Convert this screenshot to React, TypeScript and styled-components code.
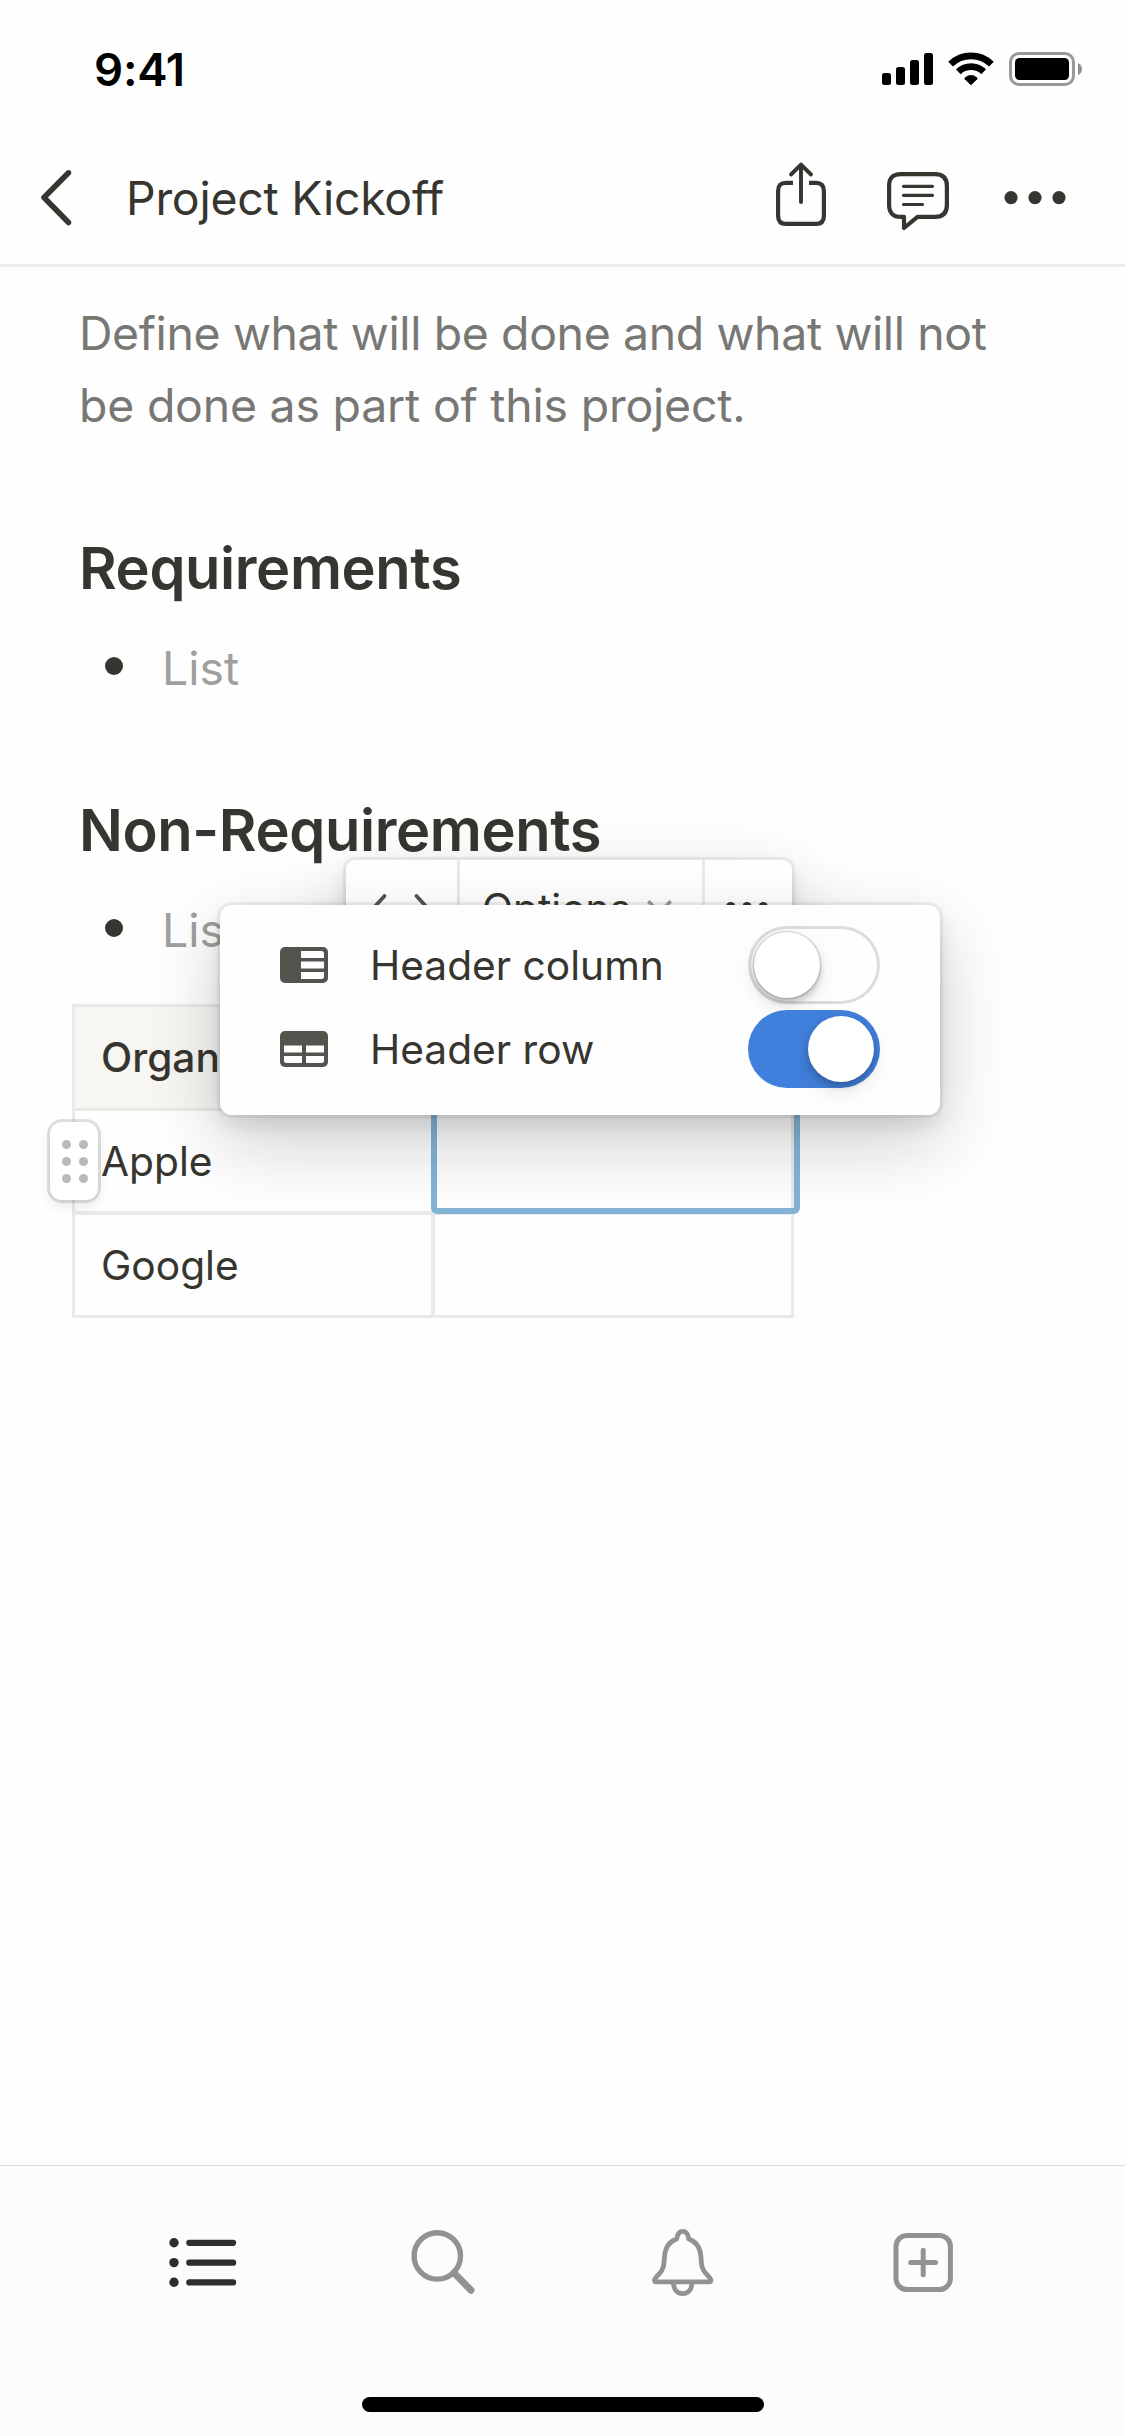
import React from "react";
import styled, { createGlobalStyle, css } from "styled-components";

const ink = "#37352f";
const line = "#e9e9e7";
const muted = "#929292";

const GlobalStyle = createGlobalStyle`
  * { box-sizing: border-box; }
  body {
    margin: 0;
    background: #fefefe;
    font-family: Inter, "Liberation Sans", sans-serif;
    color: ${ink};
  }
  svg { display: block; flex: none; overflow: visible; }
`;

const floatingShadow = css`
  box-shadow: 0 0 0 3px rgba(15, 15, 15, 0.06), 0 9px 18px rgba(15, 15, 15, 0.1),
    0 27px 72px rgba(15, 15, 15, 0.2);
`;

const Screen = styled.div`
  width: 1125px;
  height: 2436px;
  display: flex;
  flex-direction: column;
  background: #fefefe;
  overflow: hidden;
`;

const StatusBar = styled.div`
  height: 132px;
  padding: 6px 43px 0 94px;
  display: flex;
  align-items: center;
  justify-content: space-between;
`;

const Time = styled.span`
  font-size: 45.5px;
  font-weight: 600;
  letter-spacing: -0.2px;
  color: #000;
`;

const StatusIcons = styled.div`
  display: flex;
  align-items: center;
  gap: 15px;
`;

const Header = styled.header`
  height: 135px;
  border-bottom: 3px solid #ededec;
  padding: 0 59px 0 41px;
  display: flex;
  align-items: center;
`;

const Title = styled.h1`
  flex: 1;
  margin: 0 0 0 54px;
  font-size: 46.4px;
  font-weight: 400;
  letter-spacing: -0.24px;
`;

const HeaderActions = styled.div`
  display: flex;
  align-items: center;
  gap: 55px;

  & > :first-child {
    margin-right: 6px;
  }
`;

const Content = styled.main`
  position: relative;
  flex: 1;
  padding: 30px 72px 0;
`;

const Description = styled.p`
  margin: 0;
  padding: 0 7px;
  font-size: 46.4px;
  line-height: 72px;
  letter-spacing: -0.2px;
  white-space: nowrap;
  color: #787774;

  &::first-line {
    letter-spacing: -0.36px;
  }
`;

const Heading = styled.h2<{ $gap: number }>`
  margin: ${(p) => p.$gap}px 0 25px;
  padding: 0 7px;
  font-size: 57.8px;
  line-height: 78px;
  font-weight: 600;
  letter-spacing: -0.38px;
`;

const Bullet = styled.div`
  height: 72px;
  padding-left: 33px;
  display: flex;
  align-items: center;
  font-size: 46.4px;
  line-height: 72px;
  color: #9f9f9d;
  gap: 39px;

  &::before {
    content: "";
    width: 18px;
    height: 18px;
    margin-bottom: 5px;
    border-radius: 50%;
    background: ${ink};
  }
`;

const Table = styled.div`
  position: relative;
  width: 722px;
  margin-top: 38px;
  border: solid ${line};
  border-width: 3px 0 0 3px;
  display: grid;
  grid-template-columns: 360px 359px;
  grid-template-rows: 104px 104px 103px;
`;

const Cell = styled.div<{ $header?: boolean; $right?: number; $bottom?: number }>`
  padding-left: 26px;
  display: flex;
  align-items: center;
  border: solid ${line};
  border-width: 0 ${(p) => p.$right ?? 3}px ${(p) => p.$bottom ?? 3}px 0;
  background: ${(p) => (p.$header ? "#f7f6f3" : "transparent")};
  font-size: 40.7px;
  font-weight: ${(p) => (p.$header ? 500 : 400)};
`;

const Selection = styled.div`
  position: absolute;
  left: 356px;
  top: 98px;
  width: 369px;
  height: 109px;
  border: 6px solid #83b3d7;
  border-radius: 6px;
`;

const DragHandle = styled.div`
  position: absolute;
  left: -25px;
  top: 115px;
  width: 48px;
  height: 78px;
  border-radius: 12px;
  background: #fff;
  box-shadow: 0 0 0 3px rgba(15, 15, 15, 0.12), 0 6px 12px rgba(15, 15, 15, 0.1);
  display: grid;
  grid-template-columns: 9px 9px;
  grid-auto-rows: 9px;
  gap: 8px;
  place-content: center;
  padding-left: 2px;
`;

const HandleDot = styled.i`
  border-radius: 50%;
  background: #b9b9b7;
`;

const Toolbar = styled.div`
  position: absolute;
  left: 346px;
  top: 593px;
  width: 446px;
  height: 96px;
  display: flex;
  border-radius: 9px;
  background: #fff;
  ${floatingShadow}
`;

const ToolButton = styled.div<{ $width: number; $divider?: boolean }>`
  width: ${(p) => p.$width}px;
  padding-right: ${(p) => (p.$width > 200 ? 8 : 3)}px;
  display: flex;
  align-items: center;
  justify-content: center;
  gap: 16px;
  font-size: 40.7px;
  border-right: ${(p) => (p.$divider ? `3px solid ${line}` : "none")};

  & > svg {
    margin-bottom: 2px;
  }
`;

const Menu = styled.div`
  position: absolute;
  left: 220px;
  top: 638px;
  width: 720px;
  height: 210px;
  padding: 18px 60px 24px;
  border-radius: 12px;
  background: #fefefe;
  ${floatingShadow}
`;

const MenuRow = styled.div`
  height: 84px;
  display: flex;
  align-items: center;
`;

const MenuLabel = styled.span`
  flex: 1;
  margin-left: 42px;
  font-size: 40.7px;
`;

const Toggle = styled.div<{ $on?: boolean }>`
  width: 132px;
  height: 78px;
  padding: 6px;
  border-radius: 39px;
  display: flex;
  justify-content: ${(p) => (p.$on ? "flex-end" : "flex-start")};
  background: ${(p) => (p.$on ? "#407fdb" : "#fefefe")};
  box-shadow: ${(p) => (p.$on ? "none" : "inset 0 0 0 3px #dcdcdc")};
`;

const Knob = styled.div<{ $on?: boolean }>`
  width: 66px;
  height: 66px;
  border-radius: 50%;
  background: #fff;
  box-shadow: ${(p) => (p.$on ? "" : "0 0 0 1.5px rgba(15, 15, 15, 0.12), ")}
    0 4px 6px rgba(15, 15, 15, 0.24), 0 9px 24px rgba(15, 15, 15, 0.1);
`;

const TabBar = styled.nav`
  height: 271px;
  border-top: 1px solid #dededd;
  background: #fcfcfc;
  display: flex;
  flex-direction: column;
  align-items: center;
`;

const Tabs = styled.div`
  height: 231px;
  padding: 60px 0 0;
  display: flex;
`;

const Tab = styled.div<{ $active?: boolean }>`
  width: 240px;
  display: flex;
  justify-content: center;
  color: ${(p) => (p.$active ? "#2f2e2d" : muted)};
`;

const HomeIndicator = styled.div`
  width: 402px;
  height: 15px;
  border-radius: 8px;
  background: #000;
`;

const SignalIcon = () => (
  <svg width="51" height="34" viewBox="0 0 51 34">
    <rect x="0" y="21" width="9" height="12" rx="2.5" />
    <rect x="14" y="15" width="9" height="18" rx="2.5" />
    <rect x="28" y="8" width="9" height="25" rx="2.5" />
    <rect x="42" y="1" width="9" height="32" rx="2.5" />
  </svg>
);

const WifiIcon = () => (
  <svg width="46" height="34" viewBox="0 0 46 34">
    <g fill="none" stroke="#000" strokeWidth="6.8">
      <path d="M2.6 12.1A29.2 29.2 0 0 1 43.4 12.1" />
      <path d="M10.3 19.8A18.4 18.4 0 0 1 35.7 19.8" />
    </g>
    <path d="M23 33.2L16.8 27.2Q16 26.2 17 25.4Q23 20.8 29 25.4Q30 26.2 29.2 27.2Z" />
  </svg>
);

const BatteryIcon = () => (
  <svg width="73" height="34" viewBox="0 0 73 34">
    <rect x="1.5" y="1.5" width="63" height="31" rx="8.5" fill="none" stroke="#999" strokeWidth="3" />
    <rect x="6" y="6" width="54" height="22" rx="4.5" />
    <path d="M69 11Q73 13 73 17T69 23Z" fill="#8f8f8f" />
  </svg>
);

const BackIcon = () => (
  <svg width="31" height="56" viewBox="0 0 31 56" fill="none" stroke={ink} strokeWidth="5.5" strokeLinecap="round" strokeLinejoin="round">
    <path d="M27.5 2.8L3 27.5L27.5 52.5" />
  </svg>
);

const ShareIcon = () => (
  <svg width="50" height="72" viewBox="0 0 50 72" fill="none" stroke={ink} strokeWidth="4.2">
    <path d="M17 20.8H10Q2.1 20.8 2.1 28.7V54Q2.1 61.9 10 61.9H40Q47.9 61.9 47.9 54V28.7Q47.9 20.8 40 20.8H33" />
    <path d="M25 40V3M15 12.5L25 2.6L35 12.5" strokeLinecap="round" strokeLinejoin="round" strokeWidth="3.9" />
  </svg>
);

const CommentIcon = () => (
  <svg width="62" height="72" viewBox="0 0 62 72" fill="none" stroke={ink} strokeLinecap="round" strokeLinejoin="round">
    <path d="M14 12.1H48Q59.9 12.1 59.9 24V43Q59.9 54.9 48 54.9H30.5L17 66V54.9H14Q2.1 54.9 2.1 43V24Q2.1 12.1 14 12.1Z" strokeWidth="4.2" />
    <path d="M16.5 24.3H45.5M16.5 33.3H45.5M16.5 42.5H35.5" strokeWidth="3.2" />
  </svg>
);

const MoreIcon = ({ size, gap, r }: { size: number; gap: number; r: number }) => (
  <svg width={size} height={r * 2} viewBox={`0 0 ${size} ${r * 2}`} fill={ink}>
    <circle cx={size / 2 - gap} cy={r} r={r} />
    <circle cx={size / 2} cy={r} r={r} />
    <circle cx={size / 2 + gap} cy={r} r={r} />
  </svg>
);

const AnglesIcon = () => (
  <svg width="57" height="28" viewBox="0 0 57 28" fill="none" stroke="#555450" strokeWidth="3.8" strokeLinecap="round" strokeLinejoin="round">
    <path d="M12.5 3L1.5 15L12.5 27M44.5 3L55.5 15L44.5 27" />
  </svg>
);

const ChevronDown = () => (
  <svg width="25" height="15" viewBox="0 0 25 15" fill="none" stroke="#9c9c9a" strokeWidth="3.6">
    <path d="M1.3 1.3L12.5 12.5L23.7 1.3" />
  </svg>
);

const HeaderColumnIcon = () => (
  <svg width="48" height="36" viewBox="0 0 48 36">
    <rect width="48" height="36" rx="5" fill="#55534e" />
    <path d="M21 4H41.5Q44 4 44 6.5V11H21ZM21 14.5H44V21.5H21ZM21 25H44V29.5Q44 32 41.5 32H21Z" fill="#fefefe" />
  </svg>
);

const HeaderRowIcon = () => (
  <svg width="48" height="36" viewBox="0 0 48 36">
    <rect width="48" height="36" rx="5" fill="#55534e" />
    <path d="M4 14.5H22V21.5H4ZM26 14.5H44V21.5H26ZM4 25H22V32H6.5Q4 32 4 29.5ZM26 25H44V29.5Q44 32 41.5 32H26Z" fill="#fefefe" />
  </svg>
);

const ListIcon = () => (
  <svg width="72" height="72" viewBox="0 0 72 72" fill="currentColor">
    {[16.7, 36.6, 56.3].map((y) => (
      <g key={y}>
        <circle cx="7" cy={y} r="4.7" />
        <rect x="19.2" y={y - 3} width="50" height="6.2" rx="3.1" />
      </g>
    ))}
  </svg>
);

const SearchIcon = () => (
  <svg width="72" height="72" viewBox="0 0 72 72" fill="none" stroke="currentColor">
    <circle cx="30.3" cy="29.9" r="23.2" strokeWidth="5.4" />
    <path d="M47 46.9L64 64.2" strokeWidth="7" strokeLinecap="round" />
  </svg>
);

const BellIcon = () => (
  <svg width="72" height="72" viewBox="0 0 72 72" fill="none" stroke="currentColor" strokeWidth="4.8" strokeLinejoin="round">
    <path d="M29.7 13C30.3 8.2 32.5 5.4 35.7 5.4S41.1 8.2 41.7 13C49.2 15.4 53.3 20.9 54 31.4C54.5 40.4 55.1 43.4 59.2 47.9C61.7 50.6 63.9 52.2 63.9 54.2Q63.9 55.8 62.3 55.8H9.1Q7.5 55.8 7.5 54.2C7.5 52.2 9.7 50.6 12.2 47.9C16.3 43.4 16.9 40.4 17.4 31.4C18.1 20.9 22.2 15.4 29.7 13Z" />
    <path d="M26.5 56.9C26.7 63.9 30.7 67.6 35.7 67.6S44.7 63.9 44.9 56.9" />
  </svg>
);

const AddIcon = () => (
  <svg width="72" height="72" viewBox="0 0 72 72" fill="none" stroke="currentColor" strokeWidth="5">
    <rect x="9" y="9.4" width="54.4" height="54.2" rx="11" />
    <path d="M36.2 24.2V48.8M23.7 36.5H48.6" strokeLinecap="round" />
  </svg>
);

const menuItems = [
  { label: "Header column", icon: <HeaderColumnIcon />, on: false },
  { label: "Header row", icon: <HeaderRowIcon />, on: true },
];

export default function App() {
  return (
    <Screen>
      <GlobalStyle />
      <StatusBar>
        <Time>9:41</Time>
        <StatusIcons>
          <SignalIcon />
          <WifiIcon />
          <BatteryIcon />
        </StatusIcons>
      </StatusBar>
      <Header>
        <BackIcon />
        <Title>Project Kickoff</Title>
        <HeaderActions>
          <ShareIcon />
          <CommentIcon />
          <MoreIcon size={62} gap={24} r={6.6} />
        </HeaderActions>
      </Header>
      <Content>
        <Description>
          Define what will be done and what will not
          <br />
          be done as part of this project.
        </Description>
        <Heading $gap={88}>Requirements</Heading>
        <Bullet>List</Bullet>
        <Heading $gap={87}>Non-Requirements</Heading>
        <Bullet>List</Bullet>
        <Table>
          <Cell $header $right={4}>Organ</Cell>
          <Cell $header />
          <Cell $right={4} $bottom={4}>Apple</Cell>
          <Cell $bottom={4} />
          <Cell $right={4}>Google</Cell>
          <Cell />
          <Selection />
          <DragHandle>
            {Array.from({ length: 6 }, (_, i) => (
              <HandleDot key={i} />
            ))}
          </DragHandle>
        </Table>
        <Toolbar>
          <ToolButton $width={114} $divider>
            <AnglesIcon />
          </ToolButton>
          <ToolButton $width={245} $divider>
            Options
            <ChevronDown />
          </ToolButton>
          <ToolButton $width={87}>
            <MoreIcon size={42} gap={16.3} r={4.6} />
          </ToolButton>
        </Toolbar>
        <Menu>
          {menuItems.map(({ label, icon, on }) => (
            <MenuRow key={label}>
              {icon}
              <MenuLabel>{label}</MenuLabel>
              <Toggle $on={on}>
                <Knob $on={on} />
              </Toggle>
            </MenuRow>
          ))}
        </Menu>
      </Content>
      <TabBar>
        <Tabs>
          <Tab $active>
            <ListIcon />
          </Tab>
          <Tab>
            <SearchIcon />
          </Tab>
          <Tab>
            <BellIcon />
          </Tab>
          <Tab>
            <AddIcon />
          </Tab>
        </Tabs>
        <HomeIndicator />
      </TabBar>
    </Screen>
  );
}
